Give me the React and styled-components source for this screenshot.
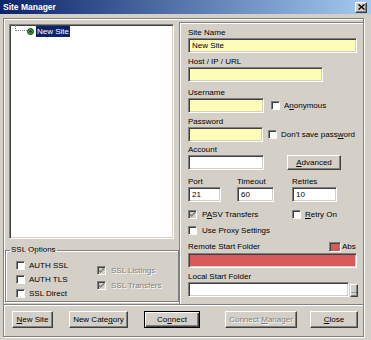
import React from "react";
import styled, { createGlobalStyle } from "styled-components";

const GlobalStyle = createGlobalStyle`
  * { box-sizing: border-box; }
  html, body { margin: 0; padding: 0; background: #d4d0c8; }
  body {
    font-family: "Liberation Sans", Arial, sans-serif;
    font-size: 8px;
    color: #000;
  }
`;

const Window = styled.div`
  width: 371px;
  height: 340px;
  background: #d4d0c8;
  overflow: hidden;
  display: flex;
  flex-direction: column;
`;

const TitleBar = styled.div`
  height: 14px;
  flex: none;
  background: linear-gradient(to right, #0a246a, #a6caf0);
  display: flex;
  align-items: center;
  justify-content: space-between;
  padding: 0 4px 0 3px;
`;

const Title = styled.span`
  color: #fff;
  font-weight: bold;
  font-size: 8.5px;
`;

const CloseBtn = styled.div`
  width: 12px;
  height: 11px;
  background: #d4d0c8;
  border: 1px solid;
  border-color: #fff #404040 #404040 #fff;
  box-shadow: inset -1px -1px #808080;
  display: flex;
  align-items: center;
  justify-content: center;
`;

const OuterFrame = styled.div`
  margin: 4px 7px 0 3px;
  height: 319px;
  border: 1px solid #808080;
  box-shadow: inset 1px 1px #fff, 1px 1px #fff;
  display: flex;
  flex-direction: column;
`;

const MainArea = styled.div`
  height: 286px;
  display: flex;
  border-bottom: 1px solid #808080;
  box-shadow: 0 1px #fff;
`;

const LeftPane = styled.div`
  width: 175px;
  display: flex;
  flex-direction: column;
`;

const TreeBox = styled.div`
  margin: 5px 0 0 5px;
  width: 165px;
  height: 215px;
  background: #fff;
  border: 1px solid;
  border-color: #808080 #fff #fff #808080;
  box-shadow: inset 1px 1px #404040, inset -1px -1px #d4d0c8;
  padding: 1px 0 0 1px;
`;

const TreeRow = styled.div`
  display: flex;
  align-items: center;
  height: 11px;
`;

const Connector = styled.span`
  margin-left: 4px;
  width: 12px;
  height: 6px;
  align-self: flex-start;
  margin-top: -1px;
  border-left: 1px dotted #808080;
  border-bottom: 1px dotted #808080;
`;

const SelectedLabel = styled.span`
  margin-left: 2px;
  padding: 0 1px;
  height: 11px;
  line-height: 11px;
  background: #0a246a;
  color: #fff;
`;

const SslGroup = styled.fieldset`
  margin: 6px 0 0 1px;
  width: 174px;
  height: 57px;
  padding: 0 0 0 10px;
  border: 1px solid #808080;
  box-shadow: inset 1px 1px #fff, 1px 1px #fff;
  display: flex;
`;

const Legend = styled.legend`
  margin-left: -6px;
  padding: 0 1px;
  line-height: 10px;
`;

const CheckColumn = styled.div`
  width: ${(p) => p.$w || "auto"};
  margin-top: ${(p) => p.$mt}px;
  display: flex;
  flex-direction: column;
  gap: ${(p) => p.$gap}px;
`;

const CheckRow = styled.div`
  display: flex;
  align-items: center;
  gap: ${(p) => p.$gap || 4}px;
  height: 9px;
  margin-top: ${(p) => p.$mt || 0}px;
  color: ${(p) => (p.$dim ? "#808080" : "#000")};
  text-shadow: ${(p) => (p.$dim ? "1px 1px #fff" : "none")};
  white-space: nowrap;
`;

const Box = styled.span`
  flex: none;
  width: ${(p) => p.$w || 9}px;
  height: ${(p) => p.$h || 9}px;
  background: ${(p) => p.$bg || "#fff"};
  border: 1px solid;
  border-color: #808080 #fff #fff #808080;
  box-shadow: inset 1px 1px #404040;
  display: flex;
  align-items: center;
  justify-content: center;
`;

const RightPane = styled.div`
  flex: 1;
  margin-top: 3px;
  border-left: 1px solid #808080;
  border-top: 1px solid #808080;
  box-shadow: inset 1px 1px #fff;
  padding: 4px 0 0 8px;
  display: flex;
  flex-direction: column;
`;

const Label = styled.div`
  height: 11px;
  line-height: 11px;
  width: ${(p) => (p.$w ? `${p.$w}px` : "auto")};
  margin-top: ${(p) => p.$mt || 0}px;
  white-space: nowrap;
`;

const TextBox = styled.div`
  flex: none;
  width: ${(p) => p.$w}px;
  height: 15px;
  margin-top: ${(p) => p.$mt || 0}px;
  background: ${(p) => p.$bg || "#fff"};
  border: 1px solid;
  border-color: #808080 #fff #fff #808080;
  box-shadow: inset 1px 1px #404040, inset -1px -1px #d4d0c8;
  padding-left: 3px;
  line-height: 13px;
`;

const Row = styled.div`
  display: flex;
  align-items: ${(p) => p.$align || "center"};
  gap: ${(p) => p.$gap || 0}px;
  margin-top: ${(p) => p.$mt || 0}px;
`;

const Column = styled.div`
  width: ${(p) => p.$w}px;
  display: flex;
  flex-direction: column;
`;

const Button = styled.div`
  flex: none;
  width: ${(p) => p.$w}px;
  height: ${(p) => p.$h || 17}px;
  margin-left: ${(p) => p.$ml || 0}px;
  background: #d4d0c8;
  border: 1px solid;
  border-color: ${(p) => (p.$default ? "#000" : "#fff #404040 #404040 #fff")};
  box-shadow: ${(p) =>
    p.$default
      ? "inset 1px 1px #fff, inset -1px -1px #404040, inset -2px -2px #808080"
      : "inset -1px -1px #808080"};
  display: flex;
  align-items: center;
  justify-content: center;
  white-space: nowrap;
  color: ${(p) => (p.$disabled ? "#808080" : "#000")};
  text-shadow: ${(p) => (p.$disabled ? "1px 1px #fff" : "none")};
`;

const DotsButton = styled(Button)`
  align-items: flex-end;
  line-height: 8px;
  font-size: 7px;
  padding-bottom: 1px;
`;

const AbsText = styled.span`
  margin-left: 1px;
`;

const U = styled.span`
  text-decoration: underline;
`;

const ButtonRow = styled.div`
  display: flex;
  margin-top: 6px;
  padding-left: 8px;
`;

const Check = ({ color = "#000" }) => (
  <svg width="7" height="7" viewBox="0 0 7 7">
    <path d="M0.8 3.2 L2.6 5 L6.2 1.2" fill="none" stroke={color} strokeWidth="1.5" />
  </svg>
);

const CheckBox = ({ checked, disabled }) => (
  <Box $bg={disabled ? "#d4d0c8" : "#fff"}>
    {checked && <Check color={disabled ? "#808080" : "#000"} />}
  </Box>
);

const SiteIcon = () => (
  <svg width="7" height="7" viewBox="0 0 7 7" style={{ flex: "none" }}>
    <circle cx="3.5" cy="3.5" r="3" fill="#3fae2a" stroke="#1d2b3a" strokeWidth="1" />
    <circle cx="3.5" cy="3.5" r="1.2" fill="#1d2b3a" />
  </svg>
);

const CloseGlyph = () => (
  <svg width="7" height="6" viewBox="0 0 7 6">
    <path d="M0.5 0.5 L6.5 5.5 M6.5 0.5 L0.5 5.5" stroke="#000" strokeWidth="1.4" />
  </svg>
);

// dim = grey label text, disabled = grey box
const Option = ({ checked, disabled, dim, gap, mt, children }) => (
  <CheckRow $dim={dim} $gap={gap} $mt={mt}>
    <CheckBox checked={checked} disabled={disabled} />
    <span>{children}</span>
  </CheckRow>
);

export default function App() {
  return (
    <>
      <GlobalStyle />
      <Window>
        <TitleBar>
          <Title>Site Manager</Title>
          <CloseBtn>
            <CloseGlyph />
          </CloseBtn>
        </TitleBar>
        <OuterFrame>
          <MainArea>
            <LeftPane>
              <TreeBox>
                <TreeRow>
                  <Connector />
                  <SiteIcon />
                  <SelectedLabel>New Site</SelectedLabel>
                </TreeRow>
              </TreeBox>
              <SslGroup>
                <Legend>SSL Options</Legend>
                <CheckColumn $w="81px" $mt={6} $gap={5}>
                  <Option>AUTH SSL</Option>
                  <Option>AUTH TLS</Option>
                  <Option>SSL Direct</Option>
                </CheckColumn>
                <CheckColumn $mt={11} $gap={6}>
                  <Option checked disabled dim gap={5}>SSL Listings</Option>
                  <Option checked disabled dim gap={5}>SSL Transfers</Option>
                </CheckColumn>
              </SslGroup>
            </LeftPane>

            <RightPane>
              <Label>Site Name</Label>
              <TextBox $w={169} $bg="#fdfdb8">New Site</TextBox>

              <Label $mt={3}>Host / IP / URL</Label>
              <TextBox $w={135} $bg="#fdfdb8" />

              <Label $mt={5}>Username</Label>
              <Row $gap={7}>
                <TextBox $w={76} $bg="#fdfdb8" />
                <Option>
                  A<U>n</U>onymous
                </Option>
              </Row>

              <Label $mt={3}>Password</Label>
              <Row $gap={5}>
                <TextBox $w={75} $bg="#fdfdb8" />
                <Option>
                  Don't save pass<U>w</U>ord
                </Option>
              </Row>

              <Label $mt={2}>Account</Label>
              <Row>
                <TextBox $w={76} />
                <Button $w={54} $h={15} $ml={23}>
                  <span>
                    <U>A</U>dvanced
                  </span>
                </Button>
              </Row>

              <Row $mt={6} $align="flex-start">
                <Column $w={49}>
                  <Label>Port</Label>
                  <TextBox $w={33}>21</TextBox>
                </Column>
                <Column $w={55}>
                  <Label>Timeout</Label>
                  <TextBox $w={37}>60</TextBox>
                </Column>
                <Column $w={50}>
                  <Label>Retries</Label>
                  <TextBox $w={45}>10</TextBox>
                </Column>
              </Row>

              <Row $mt={8}>
                <Column $w={104}>
                  <Option checked disabled gap={5}>
                    P<U>A</U>SV Transfers
                  </Option>
                </Column>
                <Option gap={4}>
                  <U>R</U>etry On
                </Option>
              </Row>

              <Option mt={7} gap={5}>
                Use Proxy Settings
              </Option>

              <Row $mt={6}>
                <Label $w={141}>Remote Start Folder</Label>
                <Box $bg="#d85a5a" $w={12} $h={10} />
                <AbsText>Abs</AbsText>
              </Row>
              <TextBox $w={169} $bg="#d85a5a" $mt={1} />

              <Label $mt={3}>Local Start Folder</Label>
              <Row $align="flex-end" $gap={1}>
                <TextBox $w={161} />
                <DotsButton $w={8} $h={13}>...</DotsButton>
              </Row>
            </RightPane>
          </MainArea>

          <ButtonRow>
            <Button $w={41}>
              <span>
                <U>N</U>ew Site
              </span>
            </Button>
            <Button $w={59} $ml={16}>
              <span>
                New Cate<U>g</U>ory
              </span>
            </Button>
            <Button $w={56} $ml={16} $default>
              <span>
                Co<U>n</U>nect
              </span>
            </Button>
            <Button $w={72} $ml={25} $disabled>
              <span>
                Connect <U>M</U>anager
              </span>
            </Button>
            <Button $w={48} $ml={13}>
              <span>
                <U>C</U>lose
              </span>
            </Button>
          </ButtonRow>
        </OuterFrame>
      </Window>
    </>
  );
}
